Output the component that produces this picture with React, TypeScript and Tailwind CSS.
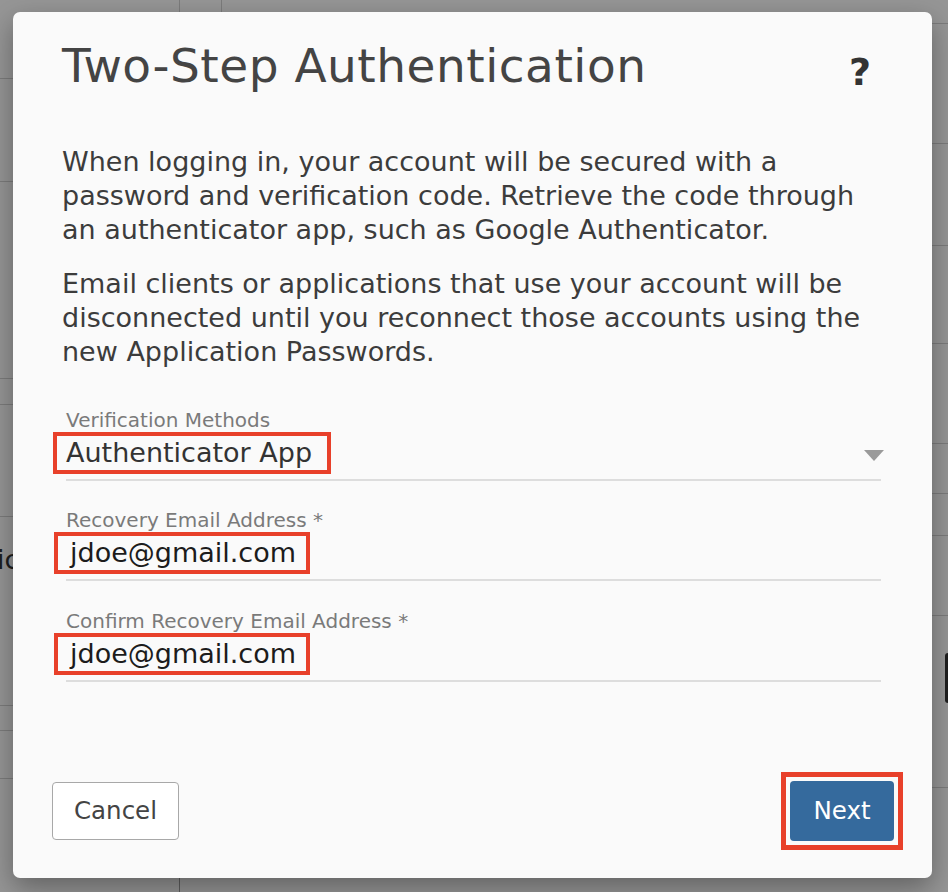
import React from "react";

const leftLines = [78, 181, 378, 404, 516, 705, 730, 778];
const rightLines = [23, 143, 245, 343, 443, 493, 535, 615, 787];

function Field({
  label,
  value,
  boxClass,
  dropdown,
  valueColor,
  className,
}: {
  label: string;
  value: string;
  boxClass: string;
  dropdown?: boolean;
  valueColor: string;
  className?: string;
}) {
  return (
    <div className={"relative ml-[4px] " + (className ?? "")}>
      <div className="text-[20px] leading-[24px] text-[#7a7a7a]">{label}</div>
      <div className="flex">
        <span className={"inline-block border-4 border-[#e8402a] text-[27px] leading-[34px] " + boxClass + " " + valueColor}>
          {value}
        </span>
      </div>
      <div className="mt-[5px] h-[2px] bg-[#dddddd]" />
      {dropdown && (
        <svg className="absolute right-[-3px] top-[42px]" width="20" height="11" viewBox="0 0 20 11">
          <polygon points="0,0 20,0 10,11" fill="#9a9a9a" />
        </svg>
      )}
    </div>
  );
}

export default function App() {
  return (
    <div className="relative h-[892px] w-[948px] overflow-hidden bg-[#969696] pl-[13px] pt-[12px] font-['DejaVu_Sans',sans-serif]">
      {/* underlying page hints */}
      {leftLines.map((y) => (
        <div key={"l" + y} className="absolute left-0 h-[1px] w-[13px] bg-[#7c7c7c]" style={{ top: y }} />
      ))}
      {rightLines.map((y) => (
        <div key={"r" + y} className="absolute right-0 h-[1px] w-[16px] bg-[#7c7c7c]" style={{ top: y }} />
      ))}
      <div className="absolute left-[179px] top-0 h-[12px] w-[1px] bg-[#7c7c7c]" />
      <div className="absolute left-[221px] top-0 h-[12px] w-[1px] bg-[#7c7c7c]" />
      <div className="absolute left-[179px] top-[878px] h-[14px] w-[1px] bg-[#5e5e5e]" />
      <div className="absolute left-[-3px] top-[543px] text-[27px] leading-[34px] text-[#1e1e1e]">ic</div>
      <div className="absolute left-[945px] top-[653px] h-[50px] w-[10px] rounded-[3px] bg-[#1e1e1e]" />

      <div className="relative flex h-[866px] w-[919px] flex-col rounded-[7px] bg-[#fafafa] shadow-[0_10px_28px_rgba(0,0,0,0.35)]">
        <div className="pl-[49px] pr-[51px] pt-[26px]">
          <div className="flex items-start justify-between">
            <h1 className="text-[47px] leading-[56px] tracking-[0.5px] text-[#444444]">Two-Step Authentication</h1>
            <span className="mr-[10px] mt-[15px] text-[38px] font-bold leading-[38px] text-[#333333]">?</span>
          </div>

          <p className="mt-[51px] text-[27px] leading-[34px] text-[#3c3c3c]">
            When logging in, your account will be secured with a password and verification code. Retrieve the code
            through an authenticator app, such as Google Authenticator.
          </p>
          <p className="mt-[20px] text-[27px] leading-[34px] text-[#3c3c3c]">
            Email clients or applications that use your account will be disconnected until you reconnect those
            accounts using the new Application Passwords.
          </p>

          <Field
            className="mt-[39px]"
            label="Verification Methods"
            value="Authenticator App"
            boxClass="-ml-[13px] pl-[9px] pr-[15px]"
            valueColor="text-[#333333]"
            dropdown
          />
          <Field
            className="mt-[27px]"
            label="Recovery Email Address *"
            value="jdoe@gmail.com"
            boxClass="-ml-[12px] pl-[12px] pr-[10px]"
            valueColor="text-[#1c1c1c]"
          />
          <Field
            className="mt-[28px]"
            label="Confirm Recovery Email Address *"
            value="jdoe@gmail.com"
            boxClass="-ml-[12px] pl-[12px] pr-[10px]"
            valueColor="text-[#1c1c1c]"
          />
        </div>

        <div className="flex-1" />

        <div className="flex items-center justify-between pb-[28px] pl-[39px] pr-[29px]">
          <button className="flex h-[58px] w-[127px] items-center justify-center rounded-[4px] border-[1.5px] border-[#a8a8a8] bg-white text-[24.5px] text-[#444444]">
            Cancel
          </button>
          <div className="border-[5px] border-[#e8402a] p-[4px]">
            <button className="flex h-[60px] w-[104px] items-center justify-center rounded-[4px] bg-[#356a9d] text-[24.5px] text-white">
              Next
            </button>
          </div>
        </div>
      </div>
    </div>
  );
}
